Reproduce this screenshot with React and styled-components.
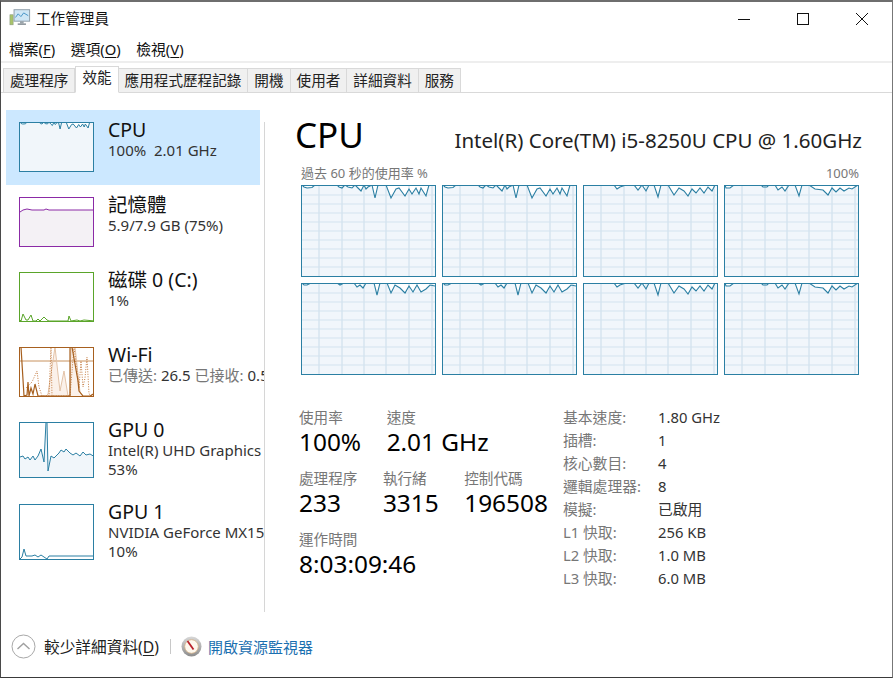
import React from 'react';
import styled, { createGlobalStyle } from 'styled-components';

const FONT = '"Noto Sans", "Noto Sans CJK TC", sans-serif';

const GlobalStyle = createGlobalStyle`
  html, body { margin: 0; padding: 0; background: #fff; }
  body { font-family: ${FONT}; color: #111; }
`;

const Window = styled.div`
  box-sizing: border-box;
  width: 893px;
  height: 678px;
  display: flex;
  flex-direction: column;
  overflow: hidden;
  background: #fff;
  border-top: 2px solid #6e6e6e;
  border-left: 1px solid #4a4a4a;
  border-right: 1px solid #777;
  border-bottom: 1px solid #3a3a3a;
`;

const TitleBar = styled.div`
  height: 30px;
  display: flex;
  align-items: center;
  padding: 0 1px 0 8px;
  font-size: 14.6px;
  flex: none;
`;

const TitleText = styled.span`
  margin-left: 5px;
  flex: 1;
`;

const WinButton = styled.div`
  width: 59px;
  height: 30px;
  margin-top: 3px;
  display: flex;
  align-items: center;
  justify-content: center;
`;

const MenuBar = styled.div`
  box-sizing: border-box;
  height: 31px;
  padding: 4px 0 0 8px;
  display: flex;
  gap: 15.5px;
  align-items: center;
  font-size: 14.8px;
  border-bottom: 2px solid #eeeeee;
  flex: none;
  u { text-underline-offset: 2px; }
`;

const TabStrip = styled.div`
  box-sizing: border-box;
  height: 30px;
  display: flex;
  align-items: flex-end;
  padding-left: 2px;
  border-bottom: 1px solid #d9d9d9;
  flex: none;
`;

const Tab = styled.div`
  box-sizing: border-box;
  height: ${(p) => (p.$active ? '27px' : '25px')};
  margin-bottom: -1px;
  padding: ${(p) => (p.$active ? '0 6px 6px' : '0 6px 3px')};
  display: flex;
  align-items: center;
  font-size: 14.6px;
  white-space: nowrap;
  color: #222;
  background: ${(p) => (p.$active ? '#fff' : '#f0f0f0')};
  border: 1px solid #d9d9d9;
  border-left-width: ${(p) => (p.$first || p.$active ? '1px' : '0')};
  border-bottom-color: ${(p) => (p.$active ? '#fff' : '#d9d9d9')};
`;

const Body = styled.div`
  flex: 1;
  display: flex;
  min-height: 0;
`;

const Sidebar = styled.div`
  width: 258px;
  margin-left: 5px;
  padding-top: 17px;
  overflow: hidden;
  flex: none;
`;

const SideItem = styled.div`
  box-sizing: border-box;
  width: 254px;
  height: ${(p) => (p.$tall ? '82px' : '75px')};
  padding-left: 13px;
  display: flex;
  background: ${(p) => (p.$selected ? '#cce8ff' : 'transparent')};
`;

const Thumb = styled.svg`
  box-sizing: border-box;
  display: block;
  width: 75px;
  height: ${(p) => p.$h}px;
  margin-top: 12px;
  flex: none;
  background: #fff;
  border: 1px solid ${(p) => p.$color};
`;

const SideText = styled.div`
  margin-left: 14px;
  padding-top: 8px;
  white-space: nowrap;
`;

const SideName = styled.div`
  font-size: 19.5px;
  line-height: 23px;
  color: #111;
`;

const SideSub = styled.div`
  font-size: 15px;
  line-height: 19px;
  color: #333;
`;

const Faded = styled.span`
  color: #777;
`;

const Divider = styled.div`
  width: 1px;
  height: 490px;
  margin-top: 29px;
  background: #d6d6d6;
  flex: none;
`;

const Main = styled.div`
  flex: 1;
  padding-left: 30px;
  min-width: 0;
`;

const MainHeader = styled.div`
  width: 567px;
  height: 56px;
  padding-top: 17px;
  display: flex;
  justify-content: space-between;
  align-items: baseline;
`;

const Heading = styled.div`
  font-size: 35px;
  line-height: 50px;
  color: #000;
`;

const Model = styled.div`
  font-size: 20.5px;
  color: #222;
`;

const ChartArea = styled.div`
  width: 558px;
  margin-left: 6px;
`;

const ChartCaption = styled.div`
  height: 14px;
  display: flex;
  justify-content: space-between;
  align-items: center;
  font-size: 13px;
  line-height: 14px;
  color: #777;
`;

const ChartGrid = styled.div`
  margin-top: 5px;
  display: grid;
  grid-template-columns: repeat(4, 135px);
  grid-auto-rows: 92px;
  gap: 6px;
`;

const CoreChart = styled.svg`
  box-sizing: border-box;
  display: block;
  width: 135px;
  height: 92px;
  background: #fff;
  border: 1px solid #2b7fa3;
`;

const Lower = styled.div`
  display: flex;
  margin-top: 32px;
  margin-left: 4px;
`;

const Stats = styled.div`
  width: 264px;
  flex: none;
  display: flex;
  flex-direction: column;
  gap: 11px;
`;

const StatRow = styled.div`
  display: flex;
  gap: 25.5px;
`;

const StatLabel = styled.div`
  font-size: 14.6px;
  line-height: 20px;
  color: #777;
  white-space: nowrap;
`;

const StatValue = styled.div`
  font-size: 24.4px;
  line-height: 30px;
  color: #000;
  white-space: nowrap;
`;

const Details = styled.div`
  margin-top: -2px;
  display: grid;
  grid-template-columns: 95px auto;
  grid-auto-rows: 23px;
  align-items: center;
  font-size: 14.8px;
`;

const DetailLabel = styled.div`
  color: #777;
  white-space: nowrap;
`;

const DetailValue = styled.div`
  color: #333;
  white-space: nowrap;
`;

const Footer = styled.div`
  box-sizing: border-box;
  height: 64px;
  flex: none;
  display: flex;
  align-items: center;
  padding: 3px 0 0 10px;
  u { text-underline-offset: 2px; }
`;

const FooterLabel = styled.span`
  margin-left: 8px;
  font-size: 15.7px;
  color: #222;
`;

const FooterRule = styled.span`
  width: 1px;
  height: 15px;
  margin: 0 10px 0 11px;
  background: #c8c8c8;
`;

const FooterLink = styled.span`
  margin-left: 6px;
  font-size: 15px;
  color: #1a6fb0;
`;

// flat stretches at y=0 sit behind the chart border, like the real graph
const toPts = (arr, sx = 1, sy = 1) =>
  arr.map(([x, y]) => `${(x * sx).toFixed(1)},${y === 0 ? -1 : (y * sy).toFixed(1)}`).join(' ');

const areaOf = (arr, w, h, sx = 1, sy = 1) => `0,${h} ${toPts(arr, sx, sy)} ${w},${h}`;

const CORE_A = [[0, 0], [2, 1], [5, 2], [10, 1.5], [13, 0], [35, 0], [37, 1], [40, 2], [43, 0], [46, 1], [50, 2], [53, 0], [56, 2], [59, 5], [62, 0], [64, 3], [66, 1], [70, 0], [73, 12], [76, 0], [84, 0], [89, 12], [94, 3], [97, 2], [103, 10], [107, 3], [110, 8], [114, 2], [117, 8], [119, 2], [124, 10], [127, 0], [133, 0]];
const CORE_B = [[0, 0], [30, 0], [33, 3], [36, 1], [42, 0], [50, 0], [54, 4], [58, 0], [62, 5], [65, 0], [70, 0], [74, 11], [77, 0], [84, 0], [90, 9], [95, 2], [100, 5], [104, 10], [108, 3], [112, 7], [116, 2], [120, 7], [124, 1], [128, 5], [131, 0], [133, 0]];
const CORE_C = [[0, 0], [1, 2], [5, 2], [9, 0], [36, 0], [38, 1], [42, 1], [44, 0], [50, 0], [53, 4], [57, 1], [60, 5], [64, 0], [70, 0], [74, 10], [77, 0], [84, 0], [90, 3], [98, 4], [103, 9], [107, 2], [111, 6], [115, 2], [119, 5], [124, 2], [127, 3], [133, 0]];
const CORE_D = [[0, 0], [2, 1], [5, 1], [9, 0], [35, 0], [38, 1], [42, 0], [52, 0], [55, 3], [58, 1], [61, 4], [64, 0], [72, 0], [75, 11], [78, 0], [85, 0], [89, 9], [93, 1], [98, 4], [103, 9], [107, 2], [111, 8], [115, 1], [119, 8], [124, 5], [128, 1], [133, 2]];
const CORES = [CORE_A, CORE_A, CORE_B, CORE_C, CORE_D, CORE_D, CORE_B, CORE_C];

const V_LINES = [17, 40, 62, 84, 107, 130];
const H_LINES = [9, 18, 27, 36, 45, 54, 63, 72, 81];

const MEM = [[0, 14], [3, 12], [7, 11], [12, 12], [24, 12], [26, 11], [29, 12], [75, 12]];
const DISK = [[0, 47], [1, 48], [3, 41], [6, 47], [8, 47], [11, 42], [13, 48], [16, 48], [18, 46], [20, 48], [24, 44], [27, 47], [29, 48], [48, 48], [49, 43], [51, 48], [57, 47], [60, 48], [64, 47], [75, 48]];
const WIFI_SOLID = [[1, 0], [4, 48], [7, 47], [8, 34], [9, 48], [11, 40], [13, 46], [15, 36], [18, 48], [50, 48], [50, 0], [52, 0], [58, 33], [59, 43], [63, 48], [70, 48], [75, 45]];
const WIFI_PALE = [[20, 48], [26, 48], [28, 46], [35, 0], [38, 26], [40, 43], [44, 23], [48, 48], [50, 48], [51, 0], [55, 0], [60, 44], [63, 48]];
const WIFI_DOTTED = [[6, 40], [12, 34], [17, 23], [19, 39], [22, 48], [29, 48], [31, 0], [32, 48], [50, 48], [54, 0], [59, 40], [61, 13], [63, 39], [65, 30], [67, 9], [69, 46], [73, 48]];
const GPU0 = [[0, 34], [3, 33], [5, 36], [8, 34], [10, 37], [13, 33], [15, 37], [18, 33], [21, 26], [24, 39], [26, 0], [27, 0], [28, 48], [31, 33], [34, 35], [36, 33], [39, 30], [41, 27], [44, 29], [46, 26], [50, 30], [53, 32], [56, 30], [60, 33], [63, 29], [66, 32], [70, 31], [75, 34]];
const GPU1 = [[0, 54], [2, 52], [4, 44], [6, 51], [12, 51], [15, 50], [18, 52], [21, 50], [24, 52], [27, 54], [29, 51], [75, 51]];

function TitleIcon() {
  return (
    <svg width="22" height="19" viewBox="0 0 24 20">
      <rect x="1" y="7" width="3.5" height="11" fill="#a9c46a" stroke="#8a9a80" strokeWidth="0.6" />
      <rect x="5.5" y="1.5" width="17" height="12.5" fill="#cfe6f5" stroke="#8a99a5" />
      <polyline points="7,10 10,6 13,9 16,5 21,8" fill="none" stroke="#3f8fc4" strokeWidth="1" />
      <rect x="12" y="14" width="4" height="2.5" fill="#9aa4ab" />
      <rect x="9.5" y="16.5" width="9" height="1.5" fill="#7d878e" />
    </svg>
  );
}

function MinIcon() {
  return (
    <svg width="12" height="12" viewBox="0 0 12 12">
      <line x1="0" y1="6.5" x2="12" y2="6.5" stroke="#111" strokeWidth="1" />
    </svg>
  );
}

function MaxIcon() {
  return (
    <svg width="12" height="12" viewBox="0 0 12 12">
      <rect x="0.5" y="0.5" width="11" height="11" fill="none" stroke="#111" strokeWidth="1" />
    </svg>
  );
}

function CloseIcon() {
  return (
    <svg width="12" height="12" viewBox="0 0 12 12">
      <path d="M0 0 L12 12 M12 0 L0 12" stroke="#111" strokeWidth="1" />
    </svg>
  );
}

function CollapseIcon() {
  return (
    <svg width="25" height="25" viewBox="0 0 25 25">
      <circle cx="12.5" cy="12.5" r="11.5" fill="#fff" stroke="#a8a8a8" strokeWidth="1" />
      <polyline points="6.5,15 12.5,9.5 18.5,15" fill="none" stroke="#a0a0a0" strokeWidth="1.4" />
    </svg>
  );
}

function MonitorIcon() {
  return (
    <svg width="21" height="21" viewBox="0 0 21 21">
      <defs>
        <linearGradient id="dial" x1="0" y1="0" x2="0" y2="1">
          <stop offset="0" stopColor="#d8d8d8" />
          <stop offset="1" stopColor="#8c8c8c" />
        </linearGradient>
      </defs>
      <circle cx="10.5" cy="10.5" r="10" fill="url(#dial)" />
      <circle cx="10.5" cy="10.5" r="6.8" fill="#fdf8ee" stroke="#d8b48a" strokeWidth="0.8" />
      <line x1="6.5" y1="5" x2="12.5" y2="13.5" stroke="#b8202a" strokeWidth="1.8" />
    </svg>
  );
}

function CpuThumb() {
  const sx = 73 / 133;
  return (
    <Thumb $h={50} $color="#2b7fa3" viewBox="0 0 73 48" preserveAspectRatio="none">
      <polygon points={areaOf(CORE_A, 73, 48, sx, 0.5)} fill="#f1f6fa" />
      <polyline points={toPts(CORE_A, sx, 0.5)} fill="none" stroke="#2b7fa3" strokeWidth="1" />
    </Thumb>
  );
}

function AreaThumb({ h = 50, color, fill, data }) {
  const inner = h - 2;
  return (
    <Thumb $h={h} $color={color} viewBox={`0 0 73 ${inner}`} preserveAspectRatio="none">
      {fill && <polygon points={areaOf(data, 73, inner)} fill={fill} />}
      <polyline points={toPts(data)} fill="none" stroke={color} strokeWidth="1" />
    </Thumb>
  );
}

function WifiThumb() {
  const c = '#a7601f';
  return (
    <Thumb $h={50} $color={c} viewBox="0 0 73 48" preserveAspectRatio="none">
      <polygon points={areaOf(WIFI_PALE, 73, 48)} fill="#fbf1ea" />
      <line x1="0" y1="13" x2="73" y2="13" stroke="#c8925f" strokeWidth="1" />
      <polyline points={toPts(WIFI_PALE)} fill="none" stroke="#e3c3a8" strokeWidth="1" />
      <polyline points={toPts(WIFI_DOTTED)} fill="none" stroke="#c47b40" strokeWidth="1" strokeDasharray="1 1.5" />
      <polyline points={toPts(WIFI_SOLID)} fill="none" stroke={c} strokeWidth="1.2" />
    </Thumb>
  );
}

function Core({ data }) {
  return (
    <CoreChart viewBox="0 0 133 90" preserveAspectRatio="none">
      <polygon points={areaOf(data, 133, 90)} fill="#f1f6fb" />
      {V_LINES.map((x) => (
        <line key={x} x1={x} y1="0" x2={x} y2="90" stroke="#c9dcea" strokeWidth="1" />
      ))}
      {H_LINES.map((y) => (
        <line key={y} x1="0" y1={y} x2="133" y2={y} stroke="#d3e3ef" strokeWidth="1" />
      ))}
      <polyline points={toPts(data)} fill="none" stroke="#2b7fa3" strokeWidth="1.1" />
    </CoreChart>
  );
}

const DETAILS = [
  ['基本速度:', '1.80 GHz'],
  ['插槽:', '1'],
  ['核心數目:', '4'],
  ['邏輯處理器:', '8'],
  ['模擬:', '已啟用'],
  ['L1 快取:', '256 KB'],
  ['L2 快取:', '1.0 MB'],
  ['L3 快取:', '6.0 MB'],
];

function Stat({ label, value }) {
  return (
    <div>
      <StatLabel>{label}</StatLabel>
      <StatValue>{value}</StatValue>
    </div>
  );
}

export default function App() {
  return (
    <Window>
      <GlobalStyle />
      <TitleBar>
        <TitleIcon />
        <TitleText>工作管理員</TitleText>
        <WinButton><MinIcon /></WinButton>
        <WinButton><MaxIcon /></WinButton>
        <WinButton><CloseIcon /></WinButton>
      </TitleBar>
      <MenuBar>
        <span>檔案(<u>F</u>)</span>
        <span>選項(<u>O</u>)</span>
        <span>檢視(<u>V</u>)</span>
      </MenuBar>
      <TabStrip>
        <Tab $first>處理程序</Tab>
        <Tab $active>效能</Tab>
        <Tab>應用程式歷程記錄</Tab>
        <Tab>開機</Tab>
        <Tab>使用者</Tab>
        <Tab>詳細資料</Tab>
        <Tab>服務</Tab>
      </TabStrip>
      <Body>
        <Sidebar>
          <SideItem $selected>
            <CpuThumb />
            <SideText>
              <SideName>CPU</SideName>
              <SideSub>100%&nbsp; 2.01 GHz</SideSub>
            </SideText>
          </SideItem>
          <SideItem>
            <AreaThumb color="#8b2aa6" fill="#f4f1f5" data={MEM} />
            <SideText>
              <SideName>記憶體</SideName>
              <SideSub>5.9/7.9 GB (75%)</SideSub>
            </SideText>
          </SideItem>
          <SideItem>
            <AreaThumb color="#5aa52a" data={DISK} />
            <SideText>
              <SideName>磁碟 0 (C:)</SideName>
              <SideSub>1%</SideSub>
            </SideText>
          </SideItem>
          <SideItem>
            <WifiThumb />
            <SideText>
              <SideName>Wi-Fi</SideName>
              <SideSub><Faded>已傳送:</Faded> 26.5 <Faded>已接收:</Faded> 0.5 Mbps</SideSub>
            </SideText>
          </SideItem>
          <SideItem $tall>
            <AreaThumb h={56} color="#2b7fa3" fill="#f1f6fa" data={GPU0} />
            <SideText>
              <SideName>GPU 0</SideName>
              <SideSub>Intel(R) UHD Graphics</SideSub>
              <SideSub>53%</SideSub>
            </SideText>
          </SideItem>
          <SideItem $tall>
            <AreaThumb h={56} color="#2b7fa3" data={GPU1} />
            <SideText>
              <SideName>GPU 1</SideName>
              <SideSub>NVIDIA GeForce MX150</SideSub>
              <SideSub>10%</SideSub>
            </SideText>
          </SideItem>
        </Sidebar>
        <Divider />
        <Main>
          <MainHeader>
            <Heading>CPU</Heading>
            <Model>Intel(R) Core(TM) i5-8250U CPU @ 1.60GHz</Model>
          </MainHeader>
          <ChartArea>
            <ChartCaption>
              <span>過去 60 秒的使用率 %</span>
              <span>100%</span>
            </ChartCaption>
            <ChartGrid>
              {CORES.map((d, i) => (
                <Core key={i} data={d} />
              ))}
            </ChartGrid>
          </ChartArea>
          <Lower>
            <Stats>
              <StatRow>
                <Stat label="使用率" value="100%" />
                <Stat label="速度" value="2.01 GHz" />
              </StatRow>
              <StatRow>
                <Stat label="處理程序" value="233" />
                <Stat label="執行緒" value="3315" />
                <Stat label="控制代碼" value="196508" />
              </StatRow>
              <StatRow>
                <Stat label="運作時間" value="8:03:09:46" />
              </StatRow>
            </Stats>
            <Details>
              {DETAILS.map(([k, v]) => (
                <React.Fragment key={k}>
                  <DetailLabel>{k}</DetailLabel>
                  <DetailValue>{v}</DetailValue>
                </React.Fragment>
              ))}
            </Details>
          </Lower>
        </Main>
      </Body>
      <Footer>
        <CollapseIcon />
        <FooterLabel>較少詳細資料(<u>D</u>)</FooterLabel>
        <FooterRule />
        <MonitorIcon />
        <FooterLink>開啟資源監視器</FooterLink>
      </Footer>
    </Window>
  );
}
